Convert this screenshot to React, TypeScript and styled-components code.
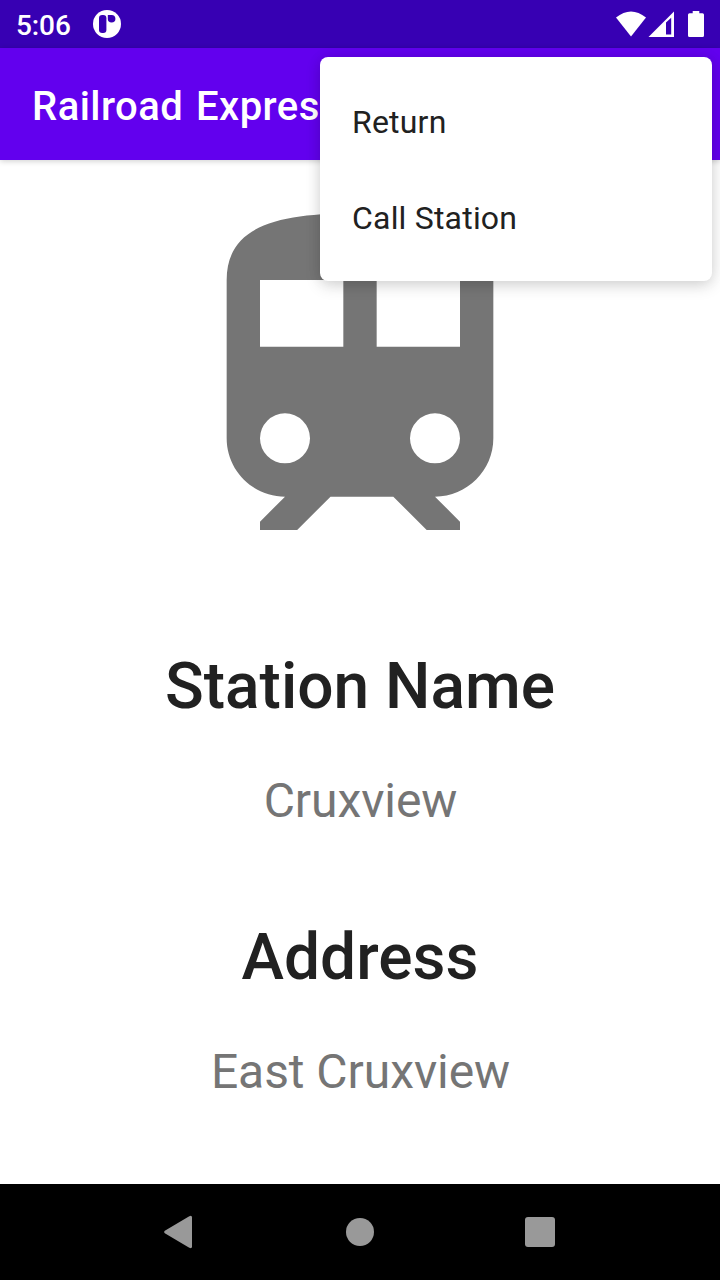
import React from "react";
import styled, { createGlobalStyle } from "styled-components";

const GlobalStyle = createGlobalStyle`
  * { box-sizing: border-box; }
  body {
    margin: 0;
    background: #fff;
    font-family: Roboto, "Liberation Sans", sans-serif;
  }
  svg { display: block; }
`;

const Screen = styled.div`
  position: relative;
  display: flex;
  flex-direction: column;
  width: 720px;
  height: 1280px;
  overflow: hidden;
  background: #fff;
`;

const StatusBar = styled.header`
  display: flex;
  align-items: center;
  justify-content: space-between;
  flex: none;
  height: 48px;
  padding: 0 14px 0 16px;
  background: #3700b3;
`;

const StatusGroup = styled.div`
  display: flex;
  align-items: center;
  height: 48px;
`;

const Clock = styled.time`
  width: 76px;
  padding-top: 3px;
  color: #fff;
  font-size: 28px;
  font-weight: 500;
  line-height: 32px;
  letter-spacing: -0.1px;
`;

const AppBar = styled.div`
  display: flex;
  align-items: center;
  flex: none;
  height: 112px;
  padding: 6px 32px 0;
  background: #6200ee;
  box-shadow: 0 1px 6px rgba(0, 0, 0, 0.2);
  z-index: 1;
`;

const AppTitle = styled.h1`
  margin: 0;
  color: #fff;
  font-size: 40px;
  font-weight: 500;
  line-height: 48px;
  letter-spacing: 0.45px;
  word-spacing: 2.5px;
  white-space: nowrap;
`;

const Content = styled.main`
  display: flex;
  flex: 1;
  flex-direction: column;
  align-items: center;
  min-height: 0;
  padding-top: 20px;
`;

const Details = styled.dl`
  display: flex;
  flex-direction: column;
  align-items: center;
  gap: 91px;
  margin: 0;
  padding-top: 69px;
`;

const Detail = styled.div`
  display: flex;
  flex-direction: column;
  align-items: center;
  gap: 48px;
`;

const Label = styled.dt`
  color: #212121;
  font-size: 64px;
  font-weight: 500;
  line-height: 76px;
`;

const Value = styled.dd`
  margin: 0;
  padding-left: 1px;
  color: #757575;
  font-size: 48px;
  line-height: 56px;
  letter-spacing: -0.06px;
`;

const Menu = styled.ul`
  position: absolute;
  top: 57px;
  right: 8px;
  z-index: 2;
  width: 392px;
  margin: 0;
  padding: 16px 0;
  border-radius: 8px;
  background: #fff;
  box-shadow: 0 5px 16px rgba(0, 0, 0, 0.14), 0 0 14px rgba(0, 0, 0, 0.08);
  list-style: none;
`;

const MenuItem = styled.li`
  display: flex;
  align-items: center;
  height: 96px;
  padding: 2px 32px 0;
  color: #212121;
  font-size: 32px;
  line-height: 38px;
  letter-spacing: 0.2px;
`;

const NavBar = styled.nav`
  display: flex;
  align-items: center;
  justify-content: center;
  flex: none;
  height: 96px;
  background: #000;
`;

const NavButton = styled.button`
  display: grid;
  place-items: center;
  width: 180px;
  height: 96px;
  padding: 0;
  border: 0;
  background: none;
`;

const NotificationIcon = () => (
  <svg width="30" height="30" viewBox="0 0 30 30">
    <circle cx="15" cy="15" r="14" fill="#fff" />
    <rect x="7" y="6" width="7.4" height="18" rx="3.2" fill="#3700b3" />
    <path d="M15.8 6h3.8a3.8 3.8 0 1 1-3.8 3.8z" fill="#3700b3" />
  </svg>
);

const StatusIcons = () => (
  <svg width="92" height="48" viewBox="614 0 92 48" fill="#fff">
    <path d="M616 17.5Q631 5.5 646 17.5L631 36.5z" />
    <path fillRule="evenodd" d="M674 11.5V37H648.5zM666 22.5V34.5h5.2V17.8z" />
    <path d="M692.7 11h6.6v2.3h3.2a1.5 1.5 0 0 1 1.5 1.5v20.7a1.5 1.5 0 0 1-1.5 1.5h-13a1.5 1.5 0 0 1-1.5-1.5V14.8a1.5 1.5 0 0 1 1.5-1.5h3.2z" />
  </svg>
);

const TrainIcon = () => (
  <svg width="400" height="400" viewBox="0 0 24 24" fill="#757575">
    <path
      fillRule="evenodd"
      d="M12 2c-4.42 0-8 .5-8 4v9.5C4 17.43 5.57 19 7.5 19L6 20.5v.5h2.23l2-2H14l2 2h2v-.5L16.5 19c1.93 0 3.5-1.57 3.5-3.5V6c0-3.5-3.58-4-8-4zM7.5 17a1.5 1.5 0 1 1 0-3 1.5 1.5 0 0 1 0 3zM11 10H6V6h5zM13 10V6h5v4zM16.5 17a1.5 1.5 0 1 1 0-3 1.5 1.5 0 0 1 0 3z"
    />
  </svg>
);

const NavIcon = ({ children }: { children: React.ReactNode }) => (
  <svg width="40" height="40" viewBox="0 0 40 40" fill="#999">
    {children}
  </svg>
);

const stationDetails = [
  { label: "Station Name", value: "Cruxview" },
  { label: "Address", value: "East Cruxview" },
];

const menuItems = ["Return", "Call Station"];

export default function App() {
  return (
    <>
      <GlobalStyle />
      <Screen>
        <StatusBar>
          <StatusGroup>
            <Clock>5:06</Clock>
            <NotificationIcon />
          </StatusGroup>
          <StatusIcons />
        </StatusBar>
        <AppBar>
          <AppTitle>Railroad Express</AppTitle>
        </AppBar>
        <Content>
          <TrainIcon />
          <Details>
            {stationDetails.map(({ label, value }) => (
              <Detail key={label}>
                <Label>{label}</Label>
                <Value>{value}</Value>
              </Detail>
            ))}
          </Details>
        </Content>
        <NavBar>
          <NavButton aria-label="Back">
            <NavIcon>
              <path d="M4.8 18.7 29.3 4.3Q32 3 32 5.5v29Q32 37 29.3 35.7L4.8 21.3Q3.2 20 4.8 18.7z" />
            </NavIcon>
          </NavButton>
          <NavButton aria-label="Home">
            <NavIcon>
              <circle cx="20" cy="20" r="14" />
            </NavIcon>
          </NavButton>
          <NavButton aria-label="Overview">
            <NavIcon>
              <rect x="5" y="5" width="30" height="30" rx="3" />
            </NavIcon>
          </NavButton>
        </NavBar>
        <Menu>
          {menuItems.map((item) => (
            <MenuItem key={item}>{item}</MenuItem>
          ))}
        </Menu>
      </Screen>
    </>
  );
}
